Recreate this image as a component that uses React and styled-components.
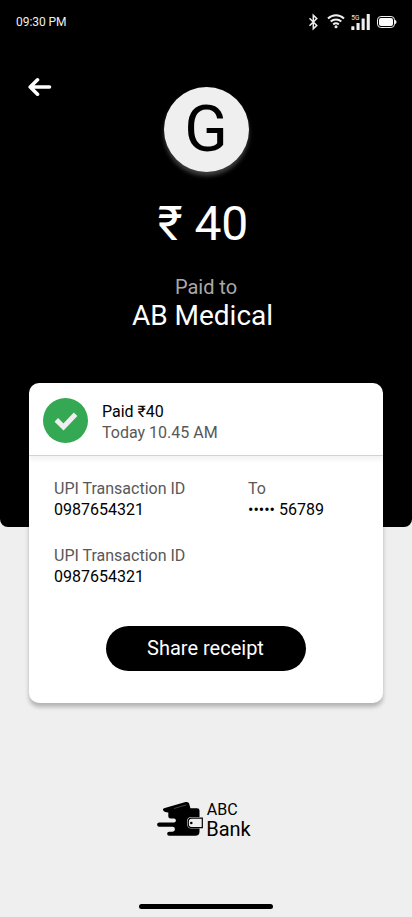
import React from "react";
import styled, { createGlobalStyle } from "styled-components";

const GlobalStyle = createGlobalStyle`
  * { box-sizing: border-box; }
  body { margin: 0; background: #efefef; font-family: Roboto, "Noto Sans", sans-serif; }
`;

const Screen = styled.main`
  width: 412px;
  height: 917px;
  display: flex;
  flex-direction: column;
  align-items: center;
  overflow: hidden;
  background: #efefef;
`;

const Hero = styled.header`
  width: 100%;
  height: 527px;
  flex: none;
  display: flex;
  flex-direction: column;
  align-items: center;
  background: #000;
  color: #fff;
  border-radius: 0 0 8px 8px;
`;

const StatusBar = styled.div`
  width: 100%;
  height: 44px;
  flex: none;
  display: flex;
  align-items: center;
  justify-content: space-between;
  padding: 0 14px 0 16px;
  font-size: 12px;
  line-height: 14px;
  letter-spacing: -0.05px;
  color: #efefef;
`;

const StatusIcons = styled.svg`
  width: 92px;
  height: 24px;
  display: block;
`;

const TopRow = styled.div`
  width: 100%;
  height: 128px;
  flex: none;
  display: grid;
  grid-template-columns: 1fr 85px 1fr;
  padding-top: 43px;
  padding-left: 1px;
`;

const BackButton = styled.button`
  width: 24px;
  height: 20px;
  margin: -10px 0 0 27px;
  padding: 0;
  border: 0;
  background: none;
  color: #fff;

  svg { display: block; }
`;

const Avatar = styled.div`
  width: 85px;
  height: 85px;
  display: grid;
  place-items: center;
  padding-right: 1px;
  border-radius: 50%;
  background: #efefef;
  box-shadow: 0 4px 4px rgba(255, 255, 255, 0.25);
  color: #000;
  font-size: 64px;
  line-height: 75px;
`;

const Amount = styled.div`
  margin: 24px 6px 0 0;
  font-size: 48px;
  line-height: 56px;
`;

const PaidTo = styled.div`
  margin-top: 23px;
  font-size: 20px;
  line-height: 24px;
  color: #a9a9a9;
`;

const Payee = styled.div`
  margin-right: 7px;
  font-size: 28px;
  line-height: 33px;
`;

const Card = styled.section`
  width: 354px;
  height: 320px;
  flex: none;
  margin: -144px 0 0;
  display: flex;
  flex-direction: column;
  border-radius: 10px;
  background: #fff;
  box-shadow: 0 4px 4px rgba(0, 0, 0, 0.25);
`;

const CardHeader = styled.div`
  height: 73px;
  flex: none;
  display: flex;
  align-items: flex-start;
  gap: 14px;
  padding: 15px 14px 0;
  border-bottom: 1px solid #d3d3d3;
  border-radius: 10px 10px 0 0;
  box-shadow: 0 4px 4px rgba(0, 0, 0, 0.05);
`;

const Badge = styled.svg`
  width: 45px;
  height: 45px;
  display: block;
`;

const HeaderText = styled.div`
  padding-top: 3px;
`;

const Value = styled.div`
  font-size: 16px;
  line-height: 21px;
  color: #000;
`;

const Label = styled(Value)`
  color: #585858;
`;

const Details = styled.div`
  display: grid;
  grid-template-columns: 194px 1fr;
  row-gap: 25px;
  padding: 22px 25px 0;
`;

const ShareButton = styled.button`
  width: 200px;
  height: 45px;
  margin: 39px auto 0;
  padding: 0 1px 2px 0;
  border: 0;
  border-radius: 23px;
  background: #000;
  color: #fff;
  font: 20px/24px Roboto, sans-serif;
`;

const Brand = styled.footer`
  display: flex;
  align-items: flex-start;
  gap: 3px;
  margin: 98px 4px 0 0;
  color: #000;
`;

const BrandName = styled.div`
  display: flex;
  flex-direction: column;
`;

const BrandTop = styled.span`
  font-size: 16px;
  line-height: 18px;
  padding-left: 0.5px;
`;

const BrandBottom = styled.span`
  font-size: 20px;
  line-height: 20px;
`;

const HomeIndicator = styled.div`
  width: 134px;
  height: 5px;
  flex: none;
  margin-top: auto;
  margin-bottom: 8.5px;
  border-radius: 3px;
  background: #000;
`;

const ENTRIES = [
  { label: "UPI Transaction ID", value: "0987654321" },
  { label: "To", value: "••••• 56789" },
  { label: "UPI Transaction ID", value: "0987654321" },
];

function StatusGlyphs() {
  return (
    <StatusIcons viewBox="306 10 92 24" fill="none" stroke="#efefef">
      <path d="M309.5 18.200l7.300 7.200-3.500 3.400V15.200l3.500 3.400-7.300 7.200" strokeWidth="1.500" />
      <g strokeWidth="2">
        <path d="M328 18.500a11.500 11.500 0 0 1 16 0" />
        <path d="M330.700 21.600a7.700 7.700 0 0 1 10.600 0" />
        <path d="M333.200 24.400a4.100 4.100 0 0 1 5.600 0" />
      </g>
      <circle cx="336" cy="26.800" r="1.500" fill="#efefef" stroke="none" />
      <g fill="#efefef" stroke="none">
        <rect x="351.300" y="26.200" width="3.100" height="3.800" rx=".5" />
        <rect x="356.500" y="23" width="3.100" height="7" rx=".5" />
        <rect x="361.600" y="18.500" width="3.100" height="11.500" rx=".5" />
        <rect x="366.700" y="14" width="3.100" height="16" rx=".5" />
        <text x="351.300" y="20" fontSize="6.500" fontFamily="Roboto, sans-serif">5G</text>
      </g>
      <rect x="377.500" y="16.500" width="17" height="11" rx="3.400" strokeWidth="1" />
      <rect x="379" y="18" width="14" height="8" rx="2" fill="#fff" stroke="none" />
      <path d="M395 19.800q1.600.7 1.600 2.200t-1.600 2.200z" fill="#efefef" stroke="none" />
    </StatusIcons>
  );
}

function WalletLogo() {
  return (
    <svg width="46" height="36" viewBox="157 801 46 36" fill="#000">
      <path d="M163 809.900Q162.600 808.800 164 808.300L185.500 802.100Q188.500 801.300 189.200 803.700L190.400 808.200H197Q199.500 808.200 199.500 810.500V817H191.500Q187.200 817 187.200 821V824.300Q187.200 828.500 191.500 828.500H199.500V831.500Q199.500 835.800 195.300 835.800H169.200A2 2 0 0 1 169.200 831.700H172.500A2.400 2.400 0 0 0 172.500 826.800H159.300A2.200 2.200 0 0 1 159.300 822.400H174A1.900 1.900 0 0 0 174 818.600H170.800A2.500 2.500 0 0 1 168.300 816.100V812.500Q163.800 812.300 163 809.900Z" />
      <path d="M174 808.500L186.300 804.900" fill="none" stroke="#efefef" strokeWidth=".3" />
      <path d="M191.500 818.200H202.300V827.600H191.500Q188.300 827.600 188.300 824.300V821.500Q188.300 818.200 191.500 818.200z" fill="#efefef" stroke="#000" strokeWidth="1.200" />
      <circle cx="191.300" cy="823" r="1.300" />
    </svg>
  );
}

export default function App() {
  return (
    <>
      <GlobalStyle />
      <Screen>
        <Hero>
          <StatusBar>
            <span>09:30 PM</span>
            <StatusGlyphs />
          </StatusBar>
          <TopRow>
            <BackButton aria-label="Back">
              <svg width="24" height="20" viewBox="28 77 24 20" fill="none" stroke="currentColor" strokeWidth="3.600" strokeLinecap="round" strokeLinejoin="round">
                <path d="M37.500 79.800L30.200 87l7.300 7.200M30.200 87h19.300" />
                <path d="M30.500 87l3-2.800v5.600z" fill="currentColor" strokeWidth="1" />
              </svg>
            </BackButton>
            <Avatar>G</Avatar>
          </TopRow>
          <Amount>₹ 40</Amount>
          <PaidTo>Paid to</PaidTo>
          <Payee>AB Medical</Payee>
        </Hero>
        <Card>
          <CardHeader>
            <Badge viewBox="0 0 45 45">
              <circle cx="22.500" cy="22.500" r="22.500" fill="#34a853" />
              <path d="M13.300 21.900l7.200 7.100L32.600 16.200" fill="none" stroke="#efefef" strokeWidth="5" />
            </Badge>
            <HeaderText>
              <Value>Paid ₹40</Value>
              <Label>Today 10.45 AM</Label>
            </HeaderText>
          </CardHeader>
          <Details>
            {ENTRIES.map((entry, index) => (
              <div key={index}>
                <Label>{entry.label}</Label>
                <Value>{entry.value}</Value>
              </div>
            ))}
          </Details>
          <ShareButton>Share receipt</ShareButton>
        </Card>
        <Brand>
          <WalletLogo />
          <BrandName>
            <BrandTop>ABC</BrandTop>
            <BrandBottom>Bank</BrandBottom>
          </BrandName>
        </Brand>
        <HomeIndicator />
      </Screen>
    </>
  );
}
